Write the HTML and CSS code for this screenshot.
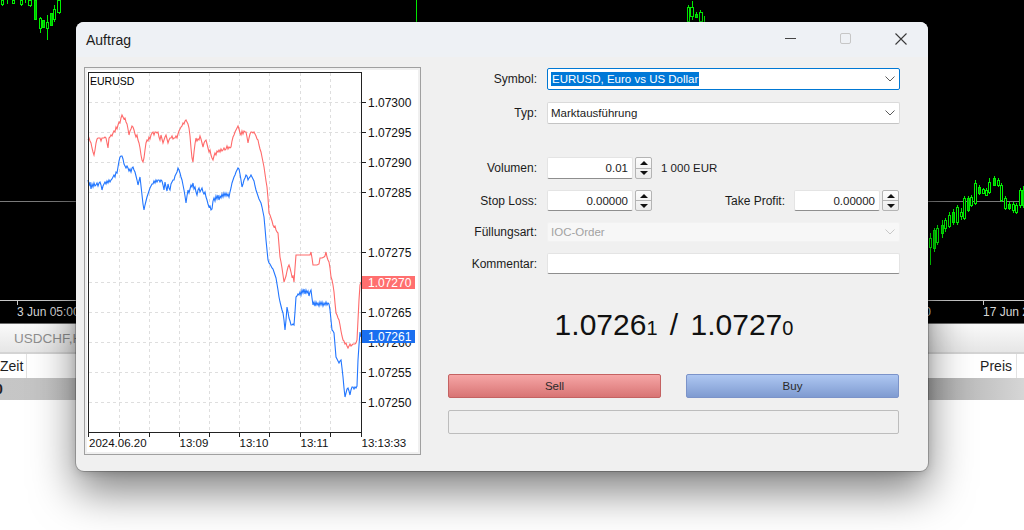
FILE: index.html
```html
<!DOCTYPE html>
<html lang="de">
<head>
<meta charset="utf-8">
<title>Auftrag</title>
<link rel="stylesheet" href="styles.css">
</head>
<body>
<div class="app">
  <div class="bgchart">
    <svg class="bgsvg" width="1024" height="323" viewBox="0 0 1024 323">
      <line x1="0" y1="201.5" x2="1024" y2="201.5" class="hline"/>
      <line x1="0" y1="300.5" x2="1024" y2="300.5" class="axisline"/>
      <line x1="17.5" y1="300" x2="17.5" y2="305" class="axisline"/>
      <line x1="983.5" y1="300" x2="983.5" y2="305" class="axisline"/>
      <text x="17" y="316" class="bgtxt">3 Jun 05:00</text>
      <text x="931" y="316" class="bgtxt" text-anchor="end">10 Jun 05:00</text>
      <text x="983" y="316" class="bgtxt">17 Jun 2024</text>
      <g class="wick">
        <path d="M2.5 0V6M7.5 0V4M21.5 0V6M25.5 0V3M30.5 0V7M40.5 17V33M47.5 15V40M54.5 5V22M59.5 0V14M416.5 0V22M688.5 5V21M692.5 1V20M696.5 12V18M700.5 10V21M704.5 16V22"/>
        <path d="M930.5 233V265M934.5 228V252M937.5 225V245M942.5 220V238M945.5 218V232M949.5 212V228M953.5 209V225M957.5 205V225M961.5 208V220M964.5 196V220M968.5 196V212M971.5 195V207M975.5 180V205M979.5 185V195M983.5 188V194M986.5 188V196M989.5 178V194M994.5 176V186M998.5 178V187M1001.5 183V202M1005.5 196V210M1009.5 202V210M1013.5 202V213M1016.5 203V214M1020.5 188V208M1023.5 186V208"/>
      </g>
      <g class="body">
        <rect x="1.5" y="0.5" width="2" height="4"/>
        <rect x="12.5" y="0.5" width="2" height="3"/>
        <rect x="20.5" y="0.5" width="2" height="4"/>
        <rect x="28.5" y="0.5" width="3" height="5"/>
        <rect x="34.5" y="0.5" width="2" height="19" class="fill"/>
        <rect x="39.5" y="18.5" width="2" height="10"/>
        <rect x="42.5" y="20.5" width="2" height="7" class="fill"/>
        <rect x="46.5" y="22.5" width="2" height="6"/>
        <rect x="50.5" y="13.5" width="2" height="12" class="fill"/>
        <rect x="53.5" y="9.5" width="2" height="10"/>
        <rect x="57.5" y="0.5" width="3" height="12"/>
        <rect x="687.5" y="7.5" width="2" height="14"/>
        <rect x="690.5" y="7.5" width="3" height="9"/>
        <rect x="695.5" y="14.5" width="2" height="3" class="fill"/>
        <rect x="699.5" y="12.5" width="3" height="9"/>
        <rect x="929.5" y="238.5" width="2" height="9"/>
        <rect x="933.5" y="230.5" width="2" height="18" class="fill"/>
        <rect x="936.5" y="228.5" width="2" height="14"/>
        <rect x="941.5" y="225.5" width="2" height="8" class="fill"/>
        <rect x="944.5" y="220.5" width="2" height="8"/>
        <rect x="948.5" y="215.5" width="2" height="11"/>
        <rect x="952.5" y="212.5" width="2" height="10" class="fill"/>
        <rect x="956.5" y="207.5" width="2" height="15"/>
        <rect x="960.5" y="212.5" width="2" height="4"/>
        <rect x="963.5" y="198.5" width="2" height="20"/>
        <rect x="967.5" y="198.5" width="2" height="12" class="fill"/>
        <rect x="970.5" y="197.5" width="2" height="8"/>
        <rect x="974.5" y="183.5" width="2" height="20"/>
        <rect x="978.5" y="187.5" width="2" height="6" class="fill"/>
        <rect x="982.5" y="189.5" width="2" height="4"/>
        <rect x="985.5" y="190.5" width="2" height="5"/>
        <rect x="988.5" y="182.5" width="2" height="10"/>
        <rect x="993.5" y="178.5" width="2" height="7" class="fill"/>
        <rect x="997.5" y="180.5" width="2" height="5"/>
        <rect x="1000.5" y="185.5" width="2" height="15"/>
        <rect x="1004.5" y="198.5" width="2" height="10"/>
        <rect x="1008.5" y="204.5" width="2" height="4" class="fill"/>
        <rect x="1012.5" y="204.5" width="2" height="6"/>
        <rect x="1015.5" y="205.5" width="2" height="7"/>
        <rect x="1019.5" y="190.5" width="2" height="15"/>
        <rect x="1022.5" y="190.5" width="2" height="15" class="fill"/>
      </g>
    </svg>
  </div>
  <div class="tabbar"><span class="tab">USDCHF,H1</span></div>
  <div class="thead">
    <div class="th th-zeit">Zeit</div>
    <div class="th-fill"></div>
    <div class="th th-preis">Preis</div>
    <div class="th-end"></div>
  </div>
  <div class="trow"><span class="trow-text">0</span></div>
  <div class="rest"></div>
</div>

<div class="dialog">
  <div class="titlebar">
    <span class="title">Auftrag</span>
    <div class="controls">
      <div class="ctl"><span class="ic-min"></span></div>
      <div class="ctl"><span class="ic-max"></span></div>
      <div class="ctl">
        <svg class="ic-close" width="12" height="12" viewBox="0 0 12 12"><path d="M0.5 0.5L11.5 11.5M11.5 0.5L0.5 11.5"/></svg>
      </div>
    </div>
  </div>
  <div class="dbody">
    <div class="chartpanel">
      <svg class="tick" width="331" height="382" viewBox="87 70 331 382">
        <rect x="87" y="70" width="331" height="382" fill="#fff"/>
        <g class="grid">
          <path d="M89 102.5H361M89 132.5H361M89 162.5H361M89 192.5H361M89 252.5H361M89 282.5H361M89 312.5H361M89 342.5H361M89 372.5H361M89 402.5H361"/>
          <path d="M119.5 73V432M149.5 73V432M179.5 73V432M209.5 73V432M239.5 73V432M269.5 73V432M300.5 73V432M330.5 73V432"/>
        </g>
        <polyline class="ask" points="88,140 89,138 90,141 91,143 92,148 93,152 94,155 95,150 96,143 97,139 98,138 100,138 101,141 102,138 104,138 105,137 106,138 107,143 108,148 109,138 110,137 111,135 112,136 113,133 114,131 115,132 116,127 117,129 118,125 119,122 120,123 121,118 122,115 123,117 124,119 125,118 126,122 127,124 128,129 129,135 130,131 131,129 132,126 133,127 134,130 135,134 136,137 137,135 138,140 139,143 140,148 141,155 142,160 143,162 144,158 145,150 146,143 147,140 148,141 149,137 150,139 151,135 152,133 153,132 154,135 155,132 156,132 157,133 158,132 159,137 160,140 161,135 162,139 163,143 164,140 165,137 166,135 167,139 168,143 169,140 170,138 171,138 172,136 173,139 174,138 175,138 176,136 177,138 178,134 179,131 180,129 181,127 182,126 183,123 184,124 185,121 186,120 187,122 188,124 189,128 190,136 191,148 192,158 193,162 194,152 195,144 196,138 197,141 198,139 199,140 200,136 201,139 202,143 203,147 204,143 205,141 206,140 207,144 208,148 209,152 210,150 211,155 212,158 213,160 214,156 215,153 216,155 217,151 218,152 219,150 220,152 221,149 222,151 223,150 224,148 225,150 226,149 227,146 228,149 229,147 230,148 231,147 232,141 233,137 234,135 235,132 236,130 237,128 238,126 239,129 240,133 241,135 242,131 243,134 244,131 245,132 246,132 247,137 248,143 249,138 250,134 251,132 252,132 253,133 254,132 255,134 256,136 257,139 258,140 259,145 260,149 261,152 262,157 263,162 264,167 265,174 266,181 267,187 268,198 269,213 270,215 271,218 272,221 273,225 274,227 275,226 276,230 277,232 278,233 279,245 280,257 281,262 282,268 283,275 284,282 285,279 286,276 287,271 288,267 289,265 290,268 291,272 292,277 293,276 294,282 295,268 296,255 298,255 300,255 302,255 304,255 306,255 308,255 310,255 311,252 312,258 313,265 315,265 317,265 319,264 320,258 322,258 324,257 325,256 326,252 327,257 328,260 329,262 330,268 331,277 332,280 333,285 334,292 335,303 336,313 337,315 338,318 339,320 340,325 341,331 342,336 343,340 344,341 345,344 346,343 347,346 348,348 349,346 350,344 351,346 352,345 353,344 354,344 355,344 356,343 357,340 358,320 359,300 360,285 361,282"/>
        <polyline class="bid" points="88,180 89,186 90,182 91,189 92,184 93,187 94,183 95,186 96,185 97,183 98,186 99,183 100,182 101,185 102,190 103,186 104,184 105,182 106,184 107,181 108,183 109,180 110,182 111,180 112,179 113,177 114,175 115,177 116,172 117,173 118,167 119,161 120,157 121,156 122,156 123,159 124,164 125,166 126,168 127,166 128,168 129,171 130,169 131,172 132,168 133,167 134,170 135,172 136,176 137,180 138,185 139,181 140,177 141,186 142,195 143,204 144,210 145,205 146,201 147,197 148,194 149,191 150,188 151,186 152,184 153,184 154,181 155,183 156,180 157,182 158,180 159,180 160,182 161,180 162,181 163,185 164,190 165,182 166,187 167,191 168,184 169,188 170,190 171,184 172,182 173,180 174,180 175,176 176,174 177,172 178,168 179,170 180,173 181,177 182,180 183,185 184,190 185,196 186,203 187,196 188,190 189,193 190,189 191,185 192,187 193,183 194,189 195,187 196,192 197,195 198,190 199,188 200,192 201,190 202,188 203,192 204,194 205,192 206,197 207,200 208,204 209,207 210,206 211,210 212,209 213,201 214,198 215,201 216,196 217,199 218,195 219,200 220,196 221,198 222,194 223,197 224,193 225,196 226,193 227,196 228,194 229,197 230,192 231,188 232,183 233,180 234,177 235,175 236,172 237,170 238,168 239,169 240,174 241,180 242,187 243,184 244,180 245,178 246,175 247,176 248,180 249,178 250,177 251,175 252,177 253,179 254,181 255,186 256,190 257,193 258,196 259,199 260,201 261,203 262,207 263,212 264,217 265,228 266,240 267,250 268,260 269,263 270,264 271,266 272,268 273,269 274,272 275,275 276,278 277,284 278,290 279,297 280,302 281,306 282,310 283,313 284,320 285,330 286,320 287,307 288,312 289,318 290,321 291,325 292,325 293,324 294,325 295,312 296,297 297,296 298,294 299,295 300,292 301,295 302,290 303,293 304,289 305,294 306,290 307,293 308,291 309,296 310,292 311,290 312,298 313,305 314,302 315,306 316,302 317,305 318,303 319,306 320,302 321,305 322,302 323,306 324,303 325,305 326,302 327,305 328,303 329,304 330,310 331,320 332,330 333,331 334,333 335,345 336,357 337,359 338,361 339,363 340,361 341,360 342,368 343,377 344,388 345,397 346,393 347,389 348,388 349,391 350,395 351,390 352,387 353,387 354,389 355,387 356,388 357,386 358,360 359,345 360,332 361,337"/>
        <rect x="88.5" y="72.5" width="273" height="360" class="frame"/>
        <path class="ticks" d="M362 102.5H366M362 132.5H366M362 162.5H366M362 192.5H366M362 252.5H366M362 312.5H366M362 342.5H366M362 372.5H366M362 402.5H366M88.5 433V437M119.5 433V437M149.5 433V437M179.5 433V437M209.5 433V437M239.5 433V437M269.5 433V437M300.5 433V437M330.5 433V437M361.5 433V437"/>
        <text x="90" y="85" class="sym">EURUSD</text>
        <text x="368" y="107" class="ax">1.07300</text>
        <text x="368" y="137" class="ax">1.07295</text>
        <text x="368" y="167" class="ax">1.07290</text>
        <text x="368" y="197" class="ax">1.07285</text>
        <text x="368" y="257" class="ax">1.07275</text>
        <text x="368" y="317" class="ax">1.07265</text>
        <text x="368" y="347" class="ax">1.07260</text>
        <text x="368" y="377" class="ax">1.07255</text>
        <text x="368" y="407" class="ax">1.07250</text>
        <rect x="362" y="276" width="53" height="13" class="tag-ask"/>
        <text x="368" y="286.5" class="ax tagtxt">1.07270</text>
        <rect x="362" y="330" width="53" height="13" class="tag-bid"/>
        <text x="368" y="340.5" class="ax tagtxt">1.07261</text>
        <text x="89" y="447" class="tm">2024.06.20</text>
        <text x="179.5" y="447" class="tm">13:09</text>
        <text x="239.5" y="447" class="tm">13:10</text>
        <text x="300.5" y="447" class="tm">13:11</text>
        <text x="361.5" y="447" class="tm">13:13:33</text>
      </svg>
    </div>

    <div class="form">
      <div class="frow r-sym">
        <span class="lbl">Symbol:</span>
        <div class="field focus grow"><span class="sel">EURUSD, Euro vs US Dollar</span>
          <svg class="chev" width="10" height="6" viewBox="0 0 10 6"><path d="M0.5 0.5L5 5L9.5 0.5"/></svg></div>
      </div>
      <div class="frow r-typ">
        <span class="lbl">Typ:</span>
        <div class="field combo grow"><span>Marktausführung</span>
          <svg class="chev" width="10" height="6" viewBox="0 0 10 6"><path d="M0.5 0.5L5 5L9.5 0.5"/></svg></div>
      </div>
      <div class="frow r-vol">
        <span class="lbl">Volumen:</span>
        <div class="field num">0.01</div>
        <div class="spin"><span class="sp-up"><i class="tri-up"></i></span><span class="sp-dn"><i class="tri-dn"></i></span></div>
        <span class="unit">1 000 EUR</span>
      </div>
      <div class="frow r-sl">
        <span class="lbl">Stop Loss:</span>
        <div class="field num">0.00000</div>
        <div class="spin"><span class="sp-up"><i class="tri-up"></i></span><span class="sp-dn"><i class="tri-dn"></i></span></div>
        <span class="tp-lbl">Take Profit:</span>
        <div class="field num">0.00000</div>
        <div class="spin"><span class="sp-up"><i class="tri-up"></i></span><span class="sp-dn"><i class="tri-dn"></i></span></div>
      </div>
      <div class="frow r-fill">
        <span class="lbl">Füllungsart:</span>
        <div class="field disabled grow"><span>IOC-Order</span>
          <svg class="chev" width="10" height="6" viewBox="0 0 10 6"><path d="M0.5 0.5L5 5L9.5 0.5"/></svg></div>
      </div>
      <div class="frow r-kom">
        <span class="lbl">Kommentar:</span>
        <div class="field grow"></div>
      </div>
      <div class="price">1.0726<span class="sm">1</span> / 1.0727<span class="sm">0</span></div>
      <div class="btns">
        <div class="btn sell">Sell</div>
        <div class="btn buy">Buy</div>
      </div>
      <div class="status"></div>
    </div>
  </div>
</div>
</body>
</html>
```

FILE: styles.css
```css
html, body {
  margin: 0;
  padding: 0;
}
body {
  width: 1024px;
  height: 530px;
  overflow: hidden;
  position: relative;
  background: #fff;
  font-family: "Liberation Sans", Arial, sans-serif;
}

/* ---------- background terminal ---------- */
.app {
  display: flex;
  flex-direction: column;
  height: 530px;
}
.bgchart {
  height: 323px;
  background: #000;
  flex: none;
}
.bgsvg {
  display: block;
  shape-rendering: crispEdges;
}
.hline { stroke: #7a7a7a; stroke-width: 1; }
.axisline { stroke: #c8c8c8; stroke-width: 1; }
.bgtxt {
  font: 12px "Liberation Sans", Arial, sans-serif;
  fill: #d6d6d6;
}
.wick path { stroke: #00f000; stroke-width: 1; fill: none; }
.body rect { stroke: #00f000; stroke-width: 1; fill: #000; }
.body rect.fill { fill: #00c000; }

.tabbar {
  flex: none;
  height: 28px;
  border-top: 1px solid #6a6a6a;
  border-bottom: 2px solid #d4d4d4;
  background: linear-gradient(#fafafa, #e6e6e6);
  display: flex;
  align-items: center;
  padding-left: 14px;
}
.tab {
  font-size: 13.5px;
  color: #8e8e8e;
}
.thead {
  flex: none;
  height: 24px;
  display: flex;
  background: #fff;
  font-size: 14px;
  color: #1e1e1e;
}
.th {
  display: flex;
  align-items: center;
  height: 100%;
}
.th-zeit {
  width: 26px;
  border-right: 1px solid #e2e2e2;
}
.th-fill { flex: 1; }
.th-preis {
  padding-right: 4px;
  border-right: 1px solid #e2e2e2;
}
.th-end { width: 7px; }
.trow {
  flex: none;
  height: 22px;
  background: linear-gradient(90deg, #c6c6c6 0%, #b8b8b8 50%, #a8a8a8 90%, #d6d6d6 100%);
  display: flex;
  align-items: center;
  overflow: hidden;
}
.trow-text {
  font-size: 14px;
  font-weight: bold;
  color: #222;
  margin-left: -5px;
}
.rest {
  flex: 1;
  background: #fff;
}

/* ---------- dialog ---------- */
.dialog {
  position: absolute;
  left: 76px;
  top: 22px;
  width: 852px;
  height: 449px;
  background: #f0f0f0;
  border-radius: 8px;
  overflow: hidden;
  box-shadow: 0 0 0 1px rgba(0, 0, 0, 0.2), 0 20px 44px rgba(0, 0, 0, 0.5), 0 2px 8px rgba(0, 0, 0, 0.15);
}
.titlebar {
  height: 35px;
  background: #eef1f5;
  display: flex;
  align-items: center;
}
.title {
  padding-left: 10px;
  font-size: 14px;
  color: #1b1b1b;
}
.controls {
  margin-left: auto;
  display: flex;
  height: 100%;
}
.ctl {
  width: 55px;
  display: flex;
  align-items: center;
  justify-content: center;
  padding-bottom: 2px;
  box-sizing: border-box;
}
.ic-min {
  width: 11px;
  height: 1px;
  background: #444;
}
.ic-max {
  width: 9px;
  height: 9px;
  border: 1px solid #c6c6c6;
  border-radius: 2px;
}
.ic-close path {
  stroke: #3a3a3a;
  stroke-width: 1.1;
  fill: none;
}

.dbody {
  display: flex;
  padding: 10px 0 0 8px;
}
.chartpanel {
  width: 337px;
  height: 388px;
  box-sizing: border-box;
  border: 1px solid #a0a0a0;
  padding: 2px;
  background: #f0f0f0;
  flex: none;
}
.chartpanel svg { display: block; }
.grid path {
  stroke: #dedede;
  stroke-width: 1;
  stroke-dasharray: 3 3;
  fill: none;
  shape-rendering: crispEdges;
}
.ask { fill: none; stroke: #ff6a6a; stroke-width: 1.1; }
.bid { fill: none; stroke: #2276ff; stroke-width: 1.1; }
.frame { fill: none; stroke: #222; stroke-width: 1; shape-rendering: crispEdges; }
.ticks { stroke: #222; stroke-width: 1; shape-rendering: crispEdges; }
.sym { font: 10.5px "Liberation Sans", Arial, sans-serif; fill: #000; }
.ax { font: 12px "Liberation Sans", Arial, sans-serif; fill: #111; }
.tm { font: 11.5px "Liberation Sans", Arial, sans-serif; fill: #111; }
.tag-ask { fill: #ff6f6f; }
.tag-bid { fill: #1a6ff0; }
.tagtxt { fill: #fff; }

/* ---------- form ---------- */
.form {
  margin-left: 27px;
  width: 452px;
  display: flex;
  flex-direction: column;
  padding-top: 1px;
}
.frow {
  display: flex;
  align-items: stretch;
  height: 22px;
  font-size: 11.5px;
  color: #1b1b1b;
}
.lbl {
  width: 89px;
  margin-right: 10px;
  text-align: right;
  flex: none;
  display: flex;
  align-items: center;
  justify-content: flex-end;
  font-size: 12px;
}
.r-typ { margin-top: 12px; }
.r-vol { margin-top: 33px; }
.r-sl { margin-top: 11px; height: 21px; }
.r-fill { margin-top: 11px; height: 20px; }
.r-kom { margin-top: 11px; height: 21px; }

.field {
  box-sizing: border-box;
  background: #fff;
  border: 1px solid #e4e4e4;
  border-bottom-color: #8e8e8e;
  border-radius: 2px;
  display: flex;
  align-items: center;
  padding: 0 4px 0 3px;
  color: #1b1b1b;
}
.grow { flex: 1; }
.field.focus {
  border: 1px solid #0078d4;
}
.field.combo {
  border-color: #dadada;
  border-bottom-color: #c4c4c4;
}
.field.disabled {
  background: #f7f7f7;
  border-color: #f2f2f2;
  color: #a2a2a2;
}
.sel {
  background: #0078d7;
  color: #fff;
  line-height: 14px;
  padding: 0 1px;
}
.chev {
  margin-left: auto;
  margin-right: 0;
}
.chev path {
  stroke: #5a5a5a;
  stroke-width: 1;
  fill: none;
}
.disabled .chev path { stroke: #c8c8c8; }

.num {
  width: 86px;
  flex: none;
  justify-content: flex-end;
}
.spin {
  width: 17px;
  margin-left: 2px;
  flex: none;
  display: flex;
  flex-direction: column;
  box-sizing: border-box;
  border: 1px solid #b4b4b4;
  border-radius: 2px;
  background: linear-gradient(#fdfdfd, #ebebeb);
}
.sp-up, .sp-dn {
  flex: 1;
  display: flex;
  align-items: center;
  justify-content: center;
}
.sp-up { border-bottom: 1px solid #b4b4b4; }
.tri-up, .tri-dn {
  width: 0;
  height: 0;
  border-left: 4px solid transparent;
  border-right: 4px solid transparent;
}
.tri-up { border-bottom: 4px solid #111; }
.tri-dn { border-top: 4px solid #111; }
.unit {
  margin-left: 9px;
  display: flex;
  align-items: center;
}
.tp-lbl {
  margin-left: auto;
  margin-right: 9px;
  display: flex;
  align-items: center;
  font-size: 12px;
}
.r-sl .spin:last-child { margin-right: 1px; }

.price {
  margin-top: 34px;
  height: 34px;
  line-height: 34px;
  text-align: center;
  font-size: 30px;
  word-spacing: 4px;
  color: #111;
}
.sm { font-size: 20px; }

.btns {
  margin-top: 32px;
  height: 24px;
  display: flex;
  justify-content: space-between;
  padding-right: 1px;
}
.btn {
  width: 213px;
  box-sizing: border-box;
  border-radius: 2px;
  display: flex;
  align-items: center;
  justify-content: center;
  font-size: 11.5px;
  color: #2a2a2a;
}
.sell {
  background: linear-gradient(#f6a6a6, #d87474);
  border: 1px solid #c46262;
}
.buy {
  background: linear-gradient(#aec7f2, #7f9bd1);
  border: 1px solid #7b93c9;
}
.status {
  margin-top: 12px;
  height: 24px;
  width: 451px;
  box-sizing: border-box;
  border: 1px solid #bdbdbd;
  border-radius: 2px;
  background: #f0f0f0;
}
```
